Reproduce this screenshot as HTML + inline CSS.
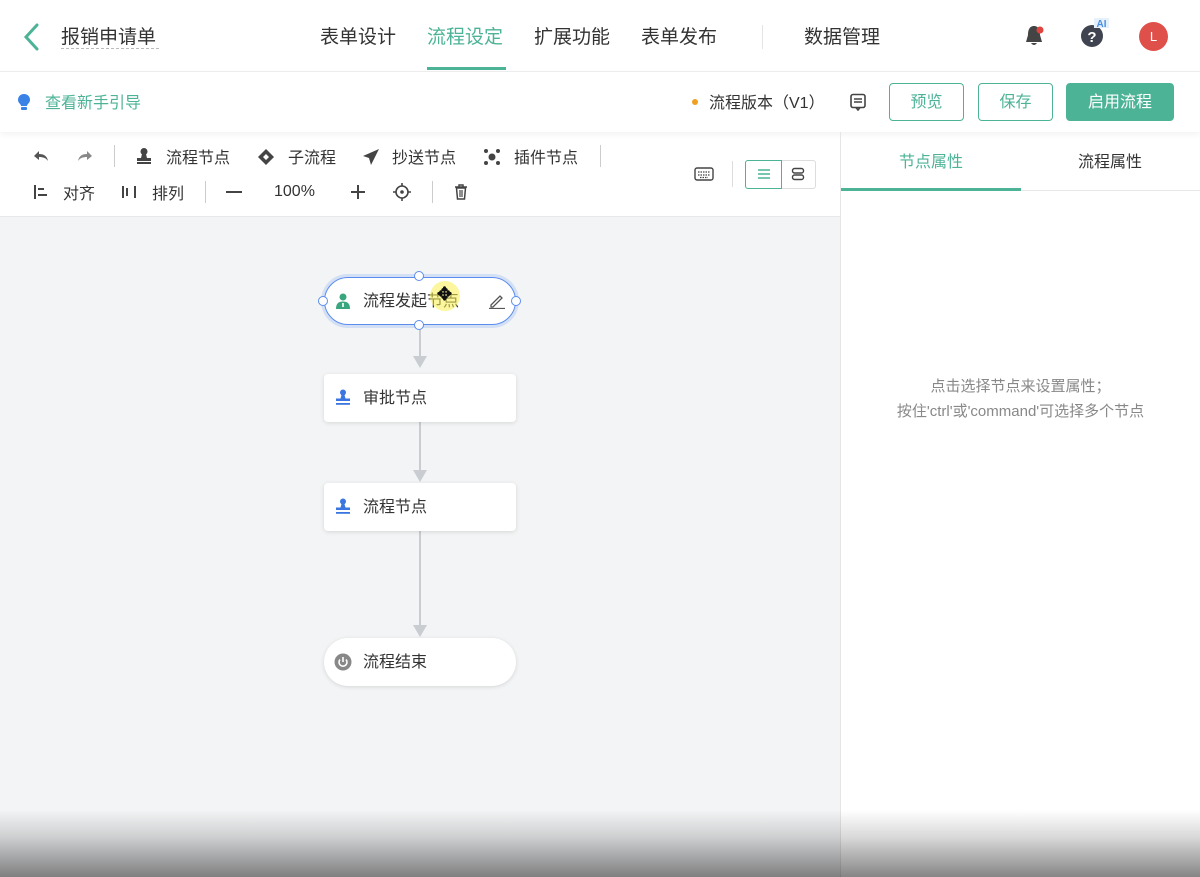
<!DOCTYPE html>
<html><head><meta charset="utf-8"><style>
*{margin:0;padding:0;box-sizing:border-box}
body{width:1200px;height:877px;overflow:hidden;position:relative;background:#fff;font-family:"Liberation Sans","Noto Sans CJK SC",sans-serif;color:#333}
.a{position:absolute}
.top{left:0;top:0;width:1200px;height:72px;border-bottom:1px solid #eee;background:#fff}
.nav{top:22px;font-size:19px;color:#333}
.bar2{left:0;top:72px;width:1200px;height:60px;background:#fff;box-shadow:0 2px 6px rgba(0,0,0,.06)}
.btn{top:83px;height:38px;border:1px solid #4db396;border-radius:4px;color:#4db396;font-size:16px;text-align:center;line-height:36px}
.tb{font-size:16px;color:#333}
.canvas{left:0;top:217px;width:840px;height:660px;background:#f2f4f5}
.node{left:324px;width:192px;height:48px;background:#fff;border-radius:4px;box-shadow:0 1px 4px rgba(0,0,0,.12);font-size:16px;color:#333;line-height:48px;padding-left:39px}
.line{left:419px;width:2px;background:#c9ccd1}
.arr{left:413px;width:0;height:0;border-left:7px solid transparent;border-right:7px solid transparent;border-top:12px solid #c9ccd1}
.h{width:10px;height:10px;border:1.5px solid #5b8def;border-radius:50%;background:#fff}
</style></head><body>
<div class="a top"></div>
<svg class="a" style="left:20px;top:22px" width="22" height="30"><path d="M17 3 L6 15 L17 27" stroke="#4db396" stroke-width="3" fill="none" stroke-linecap="round"/></svg>
<div class="a nav" style="left:61px;top:22px">报销申请单</div>
<div class="a" style="left:61px;top:48px;width:98px;border-top:1px dashed #bbb"></div>
<div class="a nav" style="left:320px">表单设计</div>
<div class="a nav" style="left:427px;color:#4db396">流程设定</div>
<div class="a" style="left:427px;top:67px;width:79px;height:3px;background:#4db396"></div>
<div class="a nav" style="left:534px">扩展功能</div>
<div class="a nav" style="left:641px">表单发布</div>
<div class="a" style="left:762px;top:25px;width:1px;height:24px;background:#e5e5e5"></div>
<div class="a nav" style="left:804px">数据管理</div>
<svg class="a" style="left:1024px;top:24px" width="22" height="24"><path d="M10 2 C5 2 4 7 4 11 L2 18 H18 L16 11 C16 7 15 2 10 2Z M7 19 Q10 23 13 19Z" fill="#444"/><circle cx="16" cy="6" r="3.5" fill="#e0443e"/></svg>
<svg class="a" style="left:1080px;top:18px" width="32" height="32"><circle cx="12" cy="18" r="11" fill="#3f4450"/><text x="12" y="24" font-size="15" font-weight="bold" fill="#fff" text-anchor="middle" font-family="Liberation Sans">?</text><rect x="14" y="0" width="15" height="10" fill="#e6f1fb"/><text x="21.5" y="9" font-size="10" font-weight="bold" fill="#4a90e2" text-anchor="middle" font-family="Liberation Sans">AI</text></svg>
<div class="a" style="left:1139px;top:22px;width:29px;height:29px;border-radius:50%;background:#e0504a;color:#fff;font-size:13px;text-align:center;line-height:29px">L</div>

<div class="a bar2"></div>
<svg class="a" style="left:17px;top:93px" width="14" height="18"><path d="M7 1 C3 1 1 4 1 7 C1 10 4 11 4 13 H10 C10 11 13 10 13 7 C13 4 11 1 7 1Z" fill="#3b82e6"/><rect x="4" y="14" width="6" height="3" rx="1" fill="#3b82e6"/></svg>
<div class="a" style="left:45px;top:89px;font-size:16px;color:#4db396">查看新手引导</div>
<div class="a" style="left:692px;top:99px;width:6px;height:6px;border-radius:50%;background:#f0a020"></div>
<div class="a" style="left:709px;top:89px;font-size:16px;color:#333">流程版本（V1）</div>
<svg class="a" style="left:849px;top:93px" width="18" height="18"><rect x="2" y="1.5" width="14" height="13" rx="2" stroke="#444" stroke-width="1.6" fill="none"/><path d="M5 6 H13 M5 9 H13 M7 14.5 L9 17 L11 14.5" stroke="#444" stroke-width="1.6" fill="none"/></svg>
<div class="a btn" style="left:889px;width:75px;line-height:38px">预览</div>
<div class="a btn" style="left:978px;width:75px;line-height:38px">保存</div>
<div class="a btn" style="left:1066px;width:108px;background:#4db396;color:#fff;line-height:38px">启用流程</div>

<!-- toolbar -->
<svg class="a" style="left:33px;top:148px" width="16" height="16"><path d="M6 3 L1 8 L6 12 V9 C10 9 13 10 15 13 C14 8 11 6 6 6Z" fill="#555"/></svg>
<svg class="a" style="left:77px;top:148px" width="16" height="16"><path d="M10 3 L15 8 L10 12 V9 C6 9 3 10 1 13 C2 8 5 6 10 6Z" fill="#888"/></svg>
<div class="a" style="left:114px;top:145px;width:1px;height:22px;background:#ccc"></div>
<svg class="a" style="left:135px;top:147px" width="18" height="18"><circle cx="9" cy="4.5" r="3.5" fill="#444"/><path d="M7 7 H11 L12 11 H16 V14 H2 V11 H6Z" fill="#444"/><rect x="2" y="15" width="14" height="2" fill="#444"/></svg>
<div class="a tb" style="left:166px;top:144px">流程节点</div>
<svg class="a" style="left:257px;top:148px" width="18" height="18"><path d="M9 1 L17 9 L9 17 L1 9Z M9 6 L6 9 L9 12 L12 9Z" fill="#444" fill-rule="evenodd"/></svg>
<div class="a tb" style="left:288px;top:144px">子流程</div>
<svg class="a" style="left:362px;top:148px" width="18" height="18"><path d="M17 1 L1 8 L7 10 L9 17Z" fill="#444"/></svg>
<div class="a tb" style="left:392px;top:144px">抄送节点</div>
<svg class="a" style="left:483px;top:148px" width="18" height="18"><circle cx="9" cy="9" r="3.5" fill="#444"/><circle cx="3" cy="3" r="2" fill="#444"/><circle cx="15" cy="3" r="2" fill="#444"/><circle cx="3" cy="15" r="2" fill="#444"/><circle cx="15" cy="15" r="2" fill="#444"/></svg>
<div class="a tb" style="left:514px;top:144px">插件节点</div>
<div class="a" style="left:600px;top:145px;width:1px;height:22px;background:#ccc"></div>
<svg class="a" style="left:33px;top:184px" width="16" height="16"><path d="M2 1 V15 M5 5 H11 M5 11 H14" stroke="#444" stroke-width="2"/></svg>
<div class="a tb" style="left:63px;top:180px">对齐</div>
<svg class="a" style="left:121px;top:184px" width="16" height="16"><path d="M2 2 V14 M6 4 V12 M14 2 V14" stroke="#444" stroke-width="2"/></svg>
<div class="a tb" style="left:152px;top:180px">排列</div>
<div class="a" style="left:205px;top:181px;width:1px;height:22px;background:#ccc"></div>
<div class="a" style="left:226px;top:191px;width:16px;height:2px;background:#444"></div>
<div class="a tb" style="left:274px;top:183px">100%</div>
<svg class="a" style="left:350px;top:184px" width="16" height="16"><path d="M8 1 V15 M1 8 H15" stroke="#444" stroke-width="2"/></svg>
<svg class="a" style="left:393px;top:183px" width="18" height="18"><circle cx="9" cy="9" r="6" stroke="#444" stroke-width="1.6" fill="none"/><circle cx="9" cy="9" r="1.8" fill="#444"/><path d="M9 0 V3 M9 15 V18 M0 9 H3 M15 9 H18" stroke="#444" stroke-width="1.6"/></svg>
<div class="a" style="left:432px;top:181px;width:1px;height:22px;background:#ccc"></div>
<svg class="a" style="left:453px;top:184px" width="16" height="16"><path d="M2 3 H14 M6 3 V1 H10 V3 M3.5 4 L4.5 15 H11.5 L12.5 4Z" stroke="#444" stroke-width="1.5" fill="none"/><path d="M7 6 V13 M9 6 V13" stroke="#444" stroke-width="1.2"/></svg>
<svg class="a" style="left:694px;top:166px" width="20" height="16"><rect x="1" y="2" width="18" height="12" rx="2" stroke="#444" stroke-width="1.4" fill="none"/><path d="M4 6 H16 M4 9 H16 M6 11.5 H14" stroke="#444" stroke-width="1.2" stroke-dasharray="1.5 1"/></svg>
<div class="a" style="left:732px;top:161px;width:1px;height:26px;background:#ddd"></div>
<div class="a" style="left:745px;top:160px;width:71px;height:29px;border:1px solid #ddd;border-radius:3px"></div>
<div class="a" style="left:745px;top:160px;width:37px;height:29px;border:1px solid #4db396;border-radius:3px 0 0 3px"></div>
<svg class="a" style="left:757px;top:168px" width="14" height="12"><path d="M1 2 H13 M1 6 H13 M1 10 H13" stroke="#4db396" stroke-width="1.4"/></svg>
<svg class="a" style="left:791px;top:167px" width="14" height="14"><rect x="1.5" y="1.5" width="11" height="4.5" rx="2" stroke="#444" stroke-width="1.4" fill="none"/><rect x="1.5" y="8" width="11" height="4.5" rx="2" stroke="#444" stroke-width="1.4" fill="none"/></svg>
<div class="a" style="left:0;top:216px;width:840px;height:1px;background:#e8e8e8"></div>

<!-- right panel -->
<div class="a" style="left:840px;top:132px;width:1px;height:745px;background:#e5e5e5"></div>
<div class="a" style="left:899px;top:148px;font-size:16px;color:#4db396">节点属性</div>
<div class="a" style="left:1078px;top:148px;font-size:16px;color:#333">流程属性</div>
<div class="a" style="left:841px;top:190px;width:359px;height:1px;background:#e8e8e8"></div>
<div class="a" style="left:841px;top:188px;width:180px;height:3px;background:#4db396"></div>
<div class="a" style="left:841px;top:374px;width:359px;text-align:center;font-size:15px;color:#888;line-height:25px">点击选择节点来设置属性；<br>按住'ctrl'或'command'可选择多个节点</div>

<!-- canvas -->
<div class="a canvas"></div>
<div class="a line" style="top:326px;height:30px"></div><div class="a arr" style="top:356px"></div>
<div class="a line" style="top:422px;height:50px"></div><div class="a arr" style="top:470px"></div>
<div class="a line" style="top:531px;height:96px"></div><div class="a arr" style="top:625px"></div>
<div class="a node" style="top:277px;height:48px;border-radius:24px;border:1.5px solid #5b8def;box-shadow:0 0 0 3px rgba(91,141,239,.2);line-height:48px;padding-left:38px">流程发起节点</div>
<div class="a" style="left:430px;top:281px;width:30px;height:30px;border-radius:50%;background:rgba(250,240,80,.55)"></div>
<div class="a" style="left:437px;top:284px;font-size:18px;font-weight:bold;color:#111">✥</div>
<svg class="a" style="left:335px;top:293px" width="16" height="16"><circle cx="8" cy="4" r="3.5" fill="#3aa67e"/><path d="M1 16 C1 10 4 8.5 8 8.5 C12 8.5 15 10 15 16Z" fill="#3aa67e"/><rect x="7.2" y="10" width="1.6" height="4" fill="#fff"/></svg>
<svg class="a" style="left:488px;top:293px" width="18" height="16"><path d="M3 12 L12 3 L14 5 L5 14 H3Z M1 15.5 H17" stroke="#555" stroke-width="1.3" fill="none"/></svg>
<div class="a h" style="left:414px;top:271px"></div>
<div class="a h" style="left:414px;top:320px"></div>
<div class="a h" style="left:318px;top:296px"></div>
<div class="a h" style="left:511px;top:296px"></div>
<div class="a node" style="top:374px;line-height:50px">审批节点</div>
<svg class="a" style="left:335px;top:389px" width="16" height="17"><circle cx="8" cy="3.5" r="3" fill="#3b76e0"/><path d="M6.5 6 H9.5 L10.5 9.5 H15 V12 H1 V9.5 H5.5Z" fill="#3b76e0"/><rect x="1" y="14" width="14" height="1.8" fill="#3b76e0"/></svg>
<div class="a node" style="top:483px;line-height:50px">流程节点</div>
<svg class="a" style="left:335px;top:498px" width="16" height="17"><circle cx="8" cy="3.5" r="3" fill="#3b76e0"/><path d="M6.5 6 H9.5 L10.5 9.5 H15 V12 H1 V9.5 H5.5Z" fill="#3b76e0"/><rect x="1" y="14" width="14" height="1.8" fill="#3b76e0"/></svg>
<div class="a node" style="top:638px;border-radius:24px;line-height:50px">流程结束</div>
<svg class="a" style="left:334px;top:653px" width="18" height="18"><circle cx="9" cy="9" r="8.5" fill="#888"/><path d="M6 6.5 A4 4 0 1 0 12 6.5" stroke="#fff" stroke-width="1.6" fill="none"/><path d="M9 4 V9" stroke="#fff" stroke-width="1.6"/></svg>

<div class="a" style="left:0;top:810px;width:1200px;height:67px;background:linear-gradient(to bottom,rgba(0,0,0,0),rgba(0,0,0,.15) 40%,rgba(0,0,0,.48))"></div>
</body></html>
